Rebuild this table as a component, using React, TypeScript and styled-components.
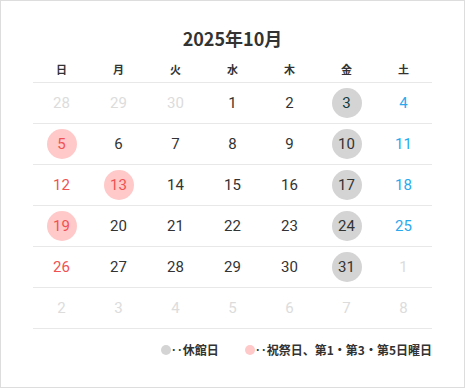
import React from "react";
import styled, { createGlobalStyle } from "styled-components";

type Tone = "normal" | "sun" | "sat" | "out" | "today";
type Mark = "closed" | "holiday" | undefined;

interface IDay {
  n: number;
  tone: Tone;
  mark?: Mark;
}

const GlobalStyle = createGlobalStyle`
  body {
    margin: 0;
    background: #fff;
  }
`;

const WEEK = ["日", "月", "火", "水", "木", "金", "土"];

const closed = [3, 10, 17, 24, 31];
const holiday = [5, 13, 19];

function buildDays(): IDay[] {
  const days: IDay[] = [];
  [28, 29, 30].forEach((n) => days.push({ n, tone: "out" }));
  for (let n = 1; n <= 31; n++) {
    const col = days.length % 7;
    let tone: Tone = "normal";
    if (col === 0) tone = "sun";
    if (col === 6) tone = "sat";
    if (n === 3) tone = "today";
    let mark: Mark;
    if (closed.includes(n)) mark = "closed";
    if (holiday.includes(n)) mark = "holiday";
    days.push({ n, tone, mark });
  }
  for (let n = 1; days.length < 42; n++) days.push({ n, tone: "out" });
  return days;
}

const App = () => {
  const days = buildDays();
  const weeks: IDay[][] = [];
  for (let i = 0; i < days.length; i += 7) weeks.push(days.slice(i, i + 7));

  return (
    <>
      <GlobalStyle />
      <Frame>
        <Title>2025年10月</Title>
        <HeadRow>
          {WEEK.map((w) => (
            <HeadCell key={w}>{w}</HeadCell>
          ))}
        </HeadRow>
        {weeks.map((week, i) => (
          <WeekRow key={i}>
            {week.map((d, j) => (
              <DayCell key={j}>
                <DayNum $tone={d.tone} $mark={d.mark}>
                  {d.n}
                </DayNum>
              </DayCell>
            ))}
          </WeekRow>
        ))}
        <Legend>
          <LegendItem>
            <Dot $color="#d4d4d4" />
            ‥休館日
          </LegendItem>
          <LegendItem>
            <Dot $color="#ffc9c9" />
            ‥祝祭日、第1・第3・第5日曜日
          </LegendItem>
        </Legend>
      </Frame>
    </>
  );
};

const toneColor: Record<Tone, string> = {
  normal: "#333",
  sun: "#f05252",
  sat: "#2aa9ee",
  out: "#dcdcdc",
  today: "#123c3c",
};

const Frame = styled.div`
  box-sizing: border-box;
  width: 465px;
  height: 388px;
  border: 1px solid #dddddd;
  padding: 25px 32px 0 32px;
  background: #fff;
  font-family: "Noto Sans CJK JP", "Noto Sans", sans-serif;
  color: #333;
`;

const Title = styled.h2`
  margin: 0;
  text-align: center;
  font-size: 18px;
  line-height: 24px;
  font-weight: 700;
  color: #333;
`;

const HeadRow = styled.div`
  display: grid;
  grid-template-columns: repeat(7, 1fr);
  margin-top: 11px;
  height: 21px;
  border-bottom: 1px solid #e8e8e8;
`;

const HeadCell = styled.div`
  text-align: center;
  font-size: 11px;
  line-height: 16px;
  font-weight: 700;
  color: #333;
`;

const WeekRow = styled.div`
  display: grid;
  grid-template-columns: repeat(7, 1fr);
  height: 40px;
  border-bottom: 1px solid #e8e8e8;
  align-items: center;
`;

const DayCell = styled.div`
  display: flex;
  justify-content: center;
  align-items: center;
`;

const DayNum = styled.span<{ $tone: Tone; $mark: Mark }>`
  display: flex;
  justify-content: center;
  align-items: center;
  width: 30px;
  height: 30px;
  border-radius: 50%;
  font-family: Roboto, "Noto Sans", sans-serif;
  font-size: 15px;
  color: ${({ $tone, $mark }) =>
    $mark === "holiday" ? "#f05252" : toneColor[$tone]};
  background: ${({ $mark }) =>
    $mark === "closed" ? "#d4d4d4" : $mark === "holiday" ? "#ffc9c9" : "transparent"};
`;

const Legend = styled.div`
  display: flex;
  justify-content: flex-end;
  gap: 26px;
  margin-top: 13px;
`;

const LegendItem = styled.div`
  display: flex;
  align-items: center;
  font-size: 12px;
  line-height: 16px;
  font-weight: 700;
  color: #333;
`;

const Dot = styled.span<{ $color: string }>`
  width: 10px;
  height: 10px;
  border-radius: 50%;
  background: ${({ $color }) => $color};
  margin-right: 0;
`;

export default App;
